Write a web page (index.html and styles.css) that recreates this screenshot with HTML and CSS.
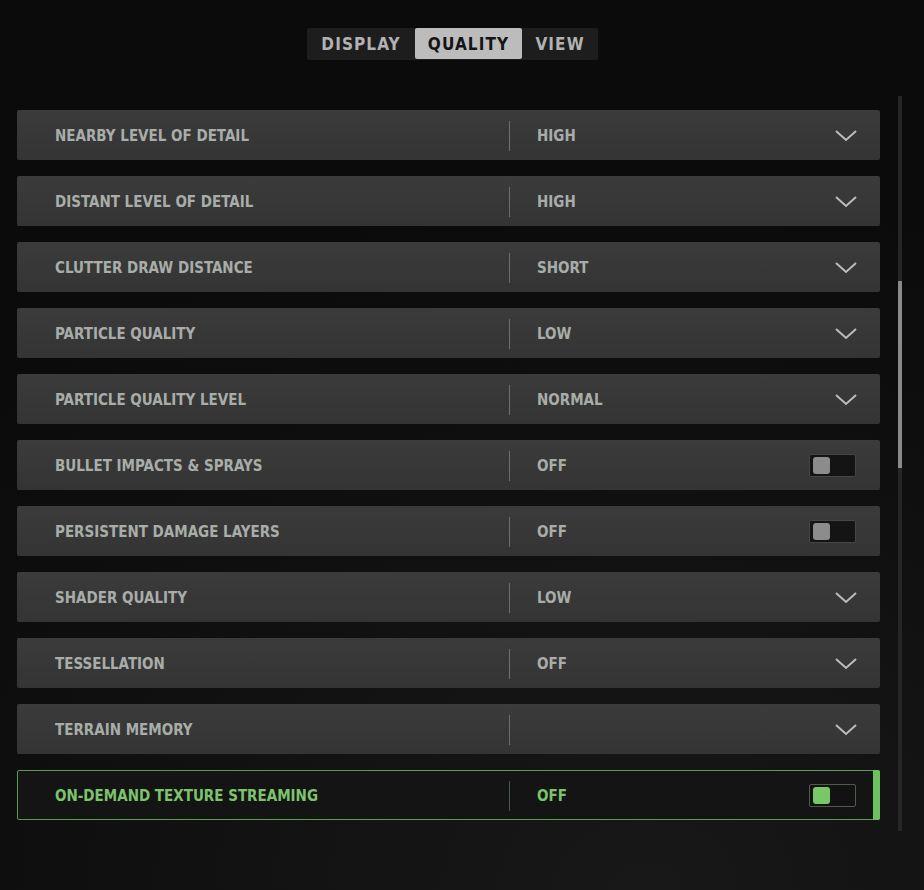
FILE: index.html
```html
<!DOCTYPE html>
<html>
<head>
<meta charset="utf-8">
<link rel="stylesheet" href="styles.css">
</head>
<body>
<div class="page">
  <nav class="tabs">
    <div class="tab">DISPLAY</div>
    <div class="tab active">QUALITY</div>
    <div class="tab">VIEW</div>
  </nav>
  <div class="content">
    <div class="list">
      <div class="row"><div class="label">NEARBY LEVEL OF DETAIL</div><div class="value">HIGH</div><svg class="chev" viewBox="0 0 22 12"><path d="M1 1 L11 10 L21 1"/></svg></div>
      <div class="row"><div class="label">DISTANT LEVEL OF DETAIL</div><div class="value">HIGH</div><svg class="chev" viewBox="0 0 22 12"><path d="M1 1 L11 10 L21 1"/></svg></div>
      <div class="row"><div class="label">CLUTTER DRAW DISTANCE</div><div class="value">SHORT</div><svg class="chev" viewBox="0 0 22 12"><path d="M1 1 L11 10 L21 1"/></svg></div>
      <div class="row"><div class="label">PARTICLE QUALITY</div><div class="value">LOW</div><svg class="chev" viewBox="0 0 22 12"><path d="M1 1 L11 10 L21 1"/></svg></div>
      <div class="row"><div class="label">PARTICLE QUALITY LEVEL</div><div class="value">NORMAL</div><svg class="chev" viewBox="0 0 22 12"><path d="M1 1 L11 10 L21 1"/></svg></div>
      <div class="row"><div class="label">BULLET IMPACTS &amp; SPRAYS</div><div class="value">OFF</div><div class="toggle"><span class="knob"></span></div></div>
      <div class="row"><div class="label">PERSISTENT DAMAGE LAYERS</div><div class="value">OFF</div><div class="toggle"><span class="knob"></span></div></div>
      <div class="row"><div class="label">SHADER QUALITY</div><div class="value">LOW</div><svg class="chev" viewBox="0 0 22 12"><path d="M1 1 L11 10 L21 1"/></svg></div>
      <div class="row"><div class="label">TESSELLATION</div><div class="value">OFF</div><svg class="chev" viewBox="0 0 22 12"><path d="M1 1 L11 10 L21 1"/></svg></div>
      <div class="row"><div class="label">TERRAIN MEMORY</div><div class="value"></div><svg class="chev" viewBox="0 0 22 12"><path d="M1 1 L11 10 L21 1"/></svg></div>
      <div class="row selected"><div class="label">ON-DEMAND TEXTURE STREAMING</div><div class="value">OFF</div><div class="toggle"><span class="knob"></span></div><span class="marker"></span></div>
    </div>
    <div class="scrollbar"><div class="thumb"></div></div>
  </div>
</div>
</body>
</html>
```
FILE: styles.css
```css
* { box-sizing: border-box; }
html, body { margin: 0; padding: 0; }
body {
  width: 924px;
  height: 890px;
  overflow: hidden;
  background: radial-gradient(ellipse 900px 700px at 70% 100%, #181818 0%, #111 50%, #0b0b0b 100%);
  font-family: "DejaVu Sans Condensed", "DejaVu Sans", sans-serif;
  font-weight: bold;
}
.page { padding-top: 28px; }
.tabs {
  display: flex;
  width: 291px;
  margin-left: 307px;
  height: 32px;
  background: #1d1d1d;
  border-radius: 2px;
}
.tab {
  display: flex;
  align-items: center;
  justify-content: center;
  height: 31px;
  padding-top: 1px;
  font-size: 17px;
  letter-spacing: 1.1px;
  color: #b2b2b2;
}
.tab:nth-child(1) { width: 108px; }
.tab.active { width: 107px; background: #bcbcbc; color: #141414; border-radius: 2px; }
.tab:nth-child(3) { width: 76px; }
.content {
  display: flex;
  margin-top: 50px;
  padding-left: 17px;
}
.list {
  width: 863px;
  display: flex;
  flex-direction: column;
  gap: 16px;
}
.row {
  position: relative;
  display: flex;
  align-items: center;
  height: 50px;
  padding-top: 1px;
  background: linear-gradient(#3b3b3b, #343434);
  border-radius: 2px;
  font-size: 15px;
  letter-spacing: 0;
  color: #a9ada9;
}
.label {
  width: 492px;
  padding-left: 38px;
  flex: none;
}
.value {
  flex: 1;
  height: 30px;
  line-height: 30px;
  padding-left: 27px;
  border-left: 1px solid #6e6e6e;
}
.chev {
  width: 22px;
  height: 12px;
  margin-right: 23px;
  fill: none;
  stroke: #bdbdbd;
  stroke-width: 2;
}
.toggle {
  width: 47px;
  height: 23px;
  margin-right: 24px;
  background: #141414;
  border: 1px solid #464646;
  border-radius: 2px;
  padding: 2px 3px;
}
.knob {
  display: block;
  width: 17px;
  height: 17px;
  background: #8c8c8c;
  border-radius: 3px;
}
.row.selected {
  background: #141414;
  border: 1px solid #5d9a55;
  color: #7cc46c;
}
.row.selected .value { border-left-color: #4a5a48; }
.row.selected .toggle { border-color: #4d5c4b; background: #121212; margin-right: 23px; }
.row.selected .knob { background: #79c868; }
.row.selected .label { width: 491px; padding-left: 37px; }
.marker {
  position: absolute;
  right: -1px;
  top: -1px;
  bottom: -1px;
  width: 7px;
  background: #6cc15e;
  border-radius: 0 2px 2px 0;
}
.scrollbar {
  margin-left: 18px;
  margin-top: -14px;
  width: 4px;
  height: 735px;
  background: #262626;
  position: relative;
}
.thumb {
  position: absolute;
  top: 185px;
  left: 0;
  width: 4px;
  height: 187px;
  background: #8a8a8a;
}
```
